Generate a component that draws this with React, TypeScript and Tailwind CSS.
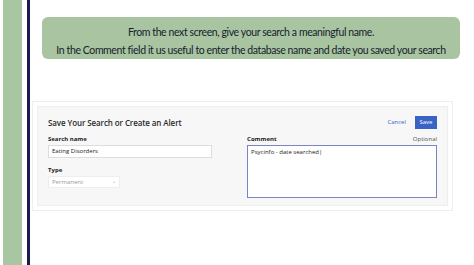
import React from 'react';

const App: React.FC = () => {
  return (
    <div className="w-[474px] h-[265px] bg-white flex overflow-hidden" style={{ fontFamily: 'Lato, "Open Sans", sans-serif' }}>
      {/* Left decoration */}
      <div className="w-[3px] shrink-0" />
      <div className="w-[19px] shrink-0 bg-[#a9c6a3]" />
      <div className="w-[5px] shrink-0" />
      <div className="w-[3px] shrink-0 bg-[#1a1a4e]" />

      {/* Slide content */}
      <div className="flex-1 flex flex-col">
        <div className="mt-[17px] ml-[12px] mr-[14px] h-[42px] rounded-[6px] bg-[#a8c4a0] flex flex-col items-center justify-center gap-[5px] pt-[6px] text-[#161d2e] text-[10.5px] leading-[13px] tracking-[-0.4px] whitespace-nowrap">
          <p>From the next screen, give your search a meaningful name.</p>
          <p>In the Comment field it us useful to enter the database name and date you saved your search</p>
        </div>

        {/* Screenshot */}
        <div className="mt-[42px] ml-[2px] w-[421px] h-[110px] border border-[#eeeeee] p-[4px]" style={{ fontFamily: '"Open Sans", sans-serif' }}>
          <div className="h-full bg-[#f7f7f7] border border-[#eeeeee] px-[10px] pt-[9px]">
            <div className="flex items-center justify-between">
              <h2 className="text-[8px] font-semibold text-[#2b2b2b] tracking-[-0.1px]">Save Your Search or Create an Alert</h2>
              <div className="flex items-center gap-[9px]">
                <span className="text-[6px] text-[#3a63c6]">Cancel</span>
                <button className="w-[22px] h-[13px] bg-[#3a63c6] text-white text-[6px] flex items-center justify-center">Save</button>
              </div>
            </div>
            <div className="mt-[6px] flex gap-[35px]">
              <div className="w-[165px] flex flex-col">
                <label className="text-[6px] font-bold text-[#222] leading-[8px]">Search name</label>
                <div className="mt-[2px] h-[13px] bg-white border border-[#dddddd] px-[3px] flex items-center text-[6px] text-[#222]">Eating Disorders</div>
                <label className="mt-[8px] text-[6px] font-bold text-[#222] leading-[8px]">Type</label>
                <div className="mt-[2px] w-[72px] h-[12px] bg-white border border-[#eeeeee] px-[3px] flex items-center justify-between text-[6px] text-[#999]">
                  <span>Permanent</span>
                  <span className="text-[5px]">⌄</span>
                </div>
              </div>
              <div className="w-[191px] flex flex-col">
                <div className="flex justify-between leading-[8px]">
                  <label className="text-[6px] font-bold text-[#222]">Comment</label>
                  <span className="text-[6px] text-[#555]">Optional</span>
                </div>
                <div className="mt-[2px] h-[53px] bg-white border-[1.5px] border-[#7b85c4] px-[3px] pt-[2px] text-[6px] text-[#222] leading-[9px]">
                  Psycinfo - date searched|
                </div>
              </div>
            </div>
          </div>
        </div>
      </div>
    </div>
  );
};

export default App;
